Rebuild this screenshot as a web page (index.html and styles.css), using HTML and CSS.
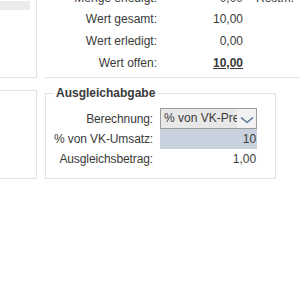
FILE: index.html
```html
<!DOCTYPE html>
<html lang="de">
<head>
    <meta charset="UTF-8">
    <title>Ausgleichabgabe</title>
    <link rel="stylesheet" href="styles.css">
</head>
<body>
    <div class="page">
        <div class="row top">
            <div class="panel left">
                <div class="field-grey"></div>
            </div>
            <div class="panel wide">
                <div class="grid">
                    <div class="lbl">Menge erledigt:</div><div class="val">0,00</div><div class="unit">Restm.</div>
                    <div class="lbl">Wert gesamt:</div><div class="val">10,00</div><div class="unit"></div>
                    <div class="lbl">Wert erledigt:</div><div class="val">0,00</div><div class="unit"></div>
                    <div class="lbl">Wert offen:</div><div class="val strong">10,00</div><div class="unit"></div>
                </div>
            </div>
        </div>

        <div class="row bottom">
            <div class="panel left low"></div>
            <fieldset class="box">
                <legend>Ausgleichabgabe</legend>
                <div class="form">
                    <label>Berechnung:</label>
                    <div class="select">
                        <span class="select-text">% von VK-Preis</span>
                        <svg class="chev" width="14" height="8" viewBox="0 0 14 8"><path d="M1 1.5 L7 6.5 L13 1.5" fill="none" stroke="#4a6a8f" stroke-width="1.3"/></svg>
                    </div>
                    <label>% von VK-Umsatz:</label>
                    <div class="input hl">10</div>
                    <label>Ausgleichsbetrag:</label>
                    <div class="input">1,00</div>
                </div>
            </fieldset>
        </div>
    </div>
</body>
</html>
```

FILE: styles.css
```css
body {
    margin: 0;
    font-family: "Liberation Sans", Arial, sans-serif;
    font-size: 12px;
    color: #3a3a3a;
    background: #fff;
    overflow: hidden;
}
.page {
    margin-top: -17px;
}
.row {
    display: grid;
    grid-template-columns: 37px 1fr;
    column-gap: 8px;
}
.panel {
    border: 1px solid #dfe4ea;
    border-left: none;
}
.left {
    padding: 17px 6px 0 0;
}
.field-grey {
    height: 9px;
    background: #ebebeb;
}
.wide {
    border-top: none;
    width: 320px;
    padding: 4px 0 4px 8px;
}
.grid {
    display: grid;
    grid-template-columns: 104px 86px auto;
    grid-auto-rows: 21.6px;
    align-items: center;
}
.lbl {
    text-align: right;
    white-space: nowrap;
}
.val {
    text-align: right;
}
.strong {
    font-weight: bold;
    text-decoration: underline;
}
.unit {
    padding-left: 13px;
}
.bottom {
    margin-top: 12px;
}
.low {
    height: 87px;
    padding: 0;
}
.box {
    margin: -4px 0 0 0;
    width: 203px;
    border: 1px solid #dfe4ea;
    padding: 8px 18px 5px 8px;
    min-width: 0;
}
.box legend {
    font-weight: bold;
    padding: 0 2px;
    margin-left: 0;
}
.form {
    display: grid;
    grid-template-columns: 1fr 97px;
    column-gap: 7px;
    align-items: center;
}
.form label {
    text-align: right;
    white-space: nowrap;
    letter-spacing: -0.1px;
}
.select {
    display: flex;
    align-items: center;
    height: 19px;
    border: 1px solid #9c9c9c;
    background: #f2f2f2;
    overflow: hidden;
}
.select-text {
    flex: 1;
    white-space: nowrap;
    overflow: hidden;
    background: #e8e8e8;
    padding-left: 3px;
    line-height: 19px;
}
.chev {
    flex: none;
    margin: 2px 2px 0 3px;
}
.input {
    text-align: right;
    height: 20px;
    line-height: 20px;
    padding-right: 1px;
}
.hl {
    background: #c8d1de;
}
```
